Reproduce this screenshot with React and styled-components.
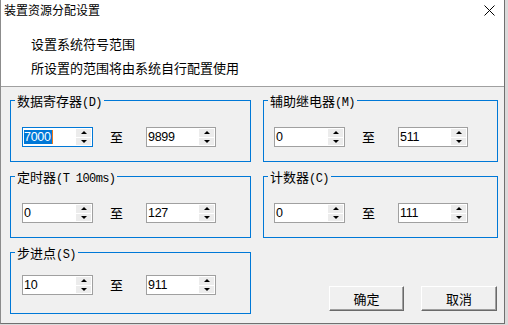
import React from 'react'
import styled, { createGlobalStyle } from 'styled-components'

const GlobalStyle = createGlobalStyle`
  html, body {
    margin: 0;
    padding: 0;
    background: #dadada;
  }
  body {
    font-family: "Noto Sans CJK SC", sans-serif;
    color: #000;
  }
`

const Window = styled.div`
  width: 503px;
  height: 323px;
  background: #f0f0f0;
  border-left: 1px solid #8c8c8c;
  border-right: 1px solid #707070;
  border-bottom: 1px solid #707070;
  display: flex;
  flex-direction: column;
`

const Header = styled.div`
  height: 86px;
  background: #fff;
  border-bottom: 1px solid #a0a0a0;
`

const TitleBar = styled.div`
  height: 20px;
  display: flex;
  align-items: center;
  justify-content: space-between;
  padding: 0 9px 0 3px;
  font-size: 12px;
  line-height: 20px;
`

const Message = styled.div`
  padding: 12px 0 0 30px;
  font-size: 13px;
  line-height: 24px;
`

const Body = styled.div`
  display: grid;
  grid-template-columns: 241px 235px;
  column-gap: 12px;
  row-gap: 14px;
  padding: 13px 0 0 9px;
`

const Group = styled.div`
  position: relative;
  box-sizing: border-box;
  height: 62px;
  border: 1px solid #0078d7;
  padding: ${({ $top }) => $top || 26}px 0 0 ${({ $left }) => $left || 11}px;
  display: flex;
  align-items: flex-start;
`

const Legend = styled.span`
  position: absolute;
  top: -8px;
  left: 4px;
  padding: 0 2px;
  background: #f0f0f0;
  font-size: 13px;
  line-height: 15px;
  white-space: nowrap;
`

const Ascii = styled.span`
  font-family: "Liberation Mono", monospace;
  font-size: 12px;
  letter-spacing: -0.6px;
`

const Spin = styled.div`
  box-sizing: border-box;
  width: ${({ $w }) => $w}px;
  height: 20px;
  background: #fff;
  border: 1px solid ${({ $focus }) => ($focus ? '#0078d7' : '#a0a0a0')};
  display: flex;
  align-items: stretch;
`

const Field = styled.div`
  flex: 1;
  display: flex;
  align-items: center;
  padding-left: 1px;
  font-family: "Liberation Sans", sans-serif;
  font-size: 12.5px;
  letter-spacing: -0.3px;
`

const Selected = styled.span`
  background: #0078d7;
  color: #fff;
  line-height: 14px;
  padding-right: 1px;
`

const Caret = styled.span`
  width: 1px;
  height: 14px;
  background: #f07818;
`

const Arrows = styled.div`
  width: 15px;
  margin: 1px 1px 1px 0;
  display: flex;
  flex-direction: column;
  gap: 1px;
`

const ArrowBtn = styled.div`
  flex: 1;
  background: #ececec;
  display: flex;
  align-items: center;
  justify-content: center;
  &::after {
    content: '';
    border-left: 3px solid transparent;
    border-right: 3px solid transparent;
    ${({ $down }) => ($down ? 'border-top: 3px solid #000;' : 'border-bottom: 3px solid #000;')}
  }
`

const To = styled.span`
  margin: 0 23px 0 17px;
  font-size: 13px;
  line-height: 20px;
`

const Buttons = styled.div`
  display: flex;
  justify-content: flex-end;
  align-items: flex-end;
  gap: 17px;
  padding: 0 1px 3px 0;
`

const Button = styled.button`
  box-sizing: border-box;
  width: ${({ $w }) => $w}px;
  height: 25px;
  padding: 0;
  background: #f0f0f0;
  border: 1px solid;
  border-color: #fff #6a6a6a #6a6a6a #fff;
  box-shadow: inset -1px -1px 0 #a0a0a0;
  font-family: "Noto Sans CJK SC", sans-serif;
  font-size: 13px;
  color: #000;
`

const SpinBox = ({ value, w, focus }) => (
  <Spin $w={w} $focus={focus}>
    <Field>
      {focus ? (
        <>
          <Selected>{value}</Selected>
          <Caret />
        </>
      ) : (
        value
      )}
    </Field>
    <Arrows>
      <ArrowBtn />
      <ArrowBtn $down />
    </Arrows>
  </Spin>
)

const Range = ({ title, code, from, to, focus, top, left }) => (
  <Group $top={top} $left={left}>
    <Legend>
      {title}
      <Ascii>({code})</Ascii>
    </Legend>
    <SpinBox value={from} w={71} focus={focus} />
    <To>至</To>
    <SpinBox value={to} w={70} />
  </Group>
)

const CloseIcon = () => (
  <svg width="11" height="11" viewBox="0 0 11 11">
    <path d="M0.5 0.5 L10.5 10.5 M10.5 0.5 L0.5 10.5" stroke="#000" strokeWidth="1" />
  </svg>
)

const App = () => (
  <>
    <GlobalStyle />
    <Window>
      <Header>
        <TitleBar>
          <span>装置资源分配设置</span>
          <CloseIcon />
        </TitleBar>
        <Message>
          <div>设置系统符号范围</div>
          <div>所设置的范围将由系统自行配置使用</div>
        </Message>
      </Header>
      <Body>
        <Range title="数据寄存器" code="D" from="7000" to="9899" focus />
        <Range title="辅助继电器" code="M" from="0" to="511" left={10} />
        <Range title="定时器" code="T 100ms" from="0" to="127" />
        <Range title="计数器" code="C" from="0" to="111" left={10} />
        <Range title="步进点" code="S" from="10" to="911" top={22} />
        <Buttons>
          <Button $w={75}>确定</Button>
          <Button $w={76}>取消</Button>
        </Buttons>
      </Body>
    </Window>
  </>
)

export default App
